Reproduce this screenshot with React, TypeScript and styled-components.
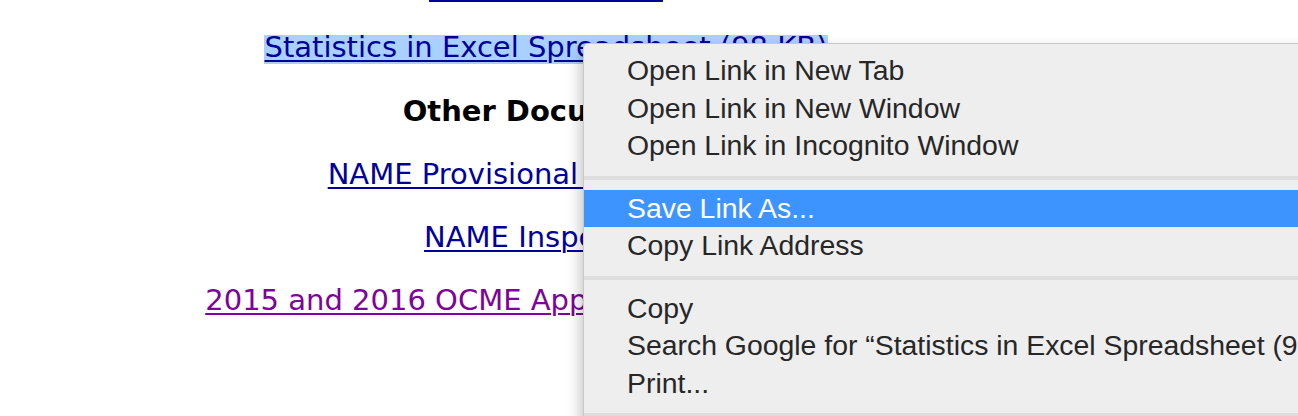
import React from 'react'
import styled, { createGlobalStyle } from 'styled-components'

const GlobalStyle = createGlobalStyle`
  html, body {
    margin: 0;
    padding: 0;
    background: #fff;
    overflow: hidden;
  }
`

const Page = styled.div`
  position: relative;
  width: 1298px;
  height: 416px;
  overflow: hidden;
  background: #fff;
`

const Content = styled.div`
  width: 1092px;
  margin-top: -30px;
  display: flex;
  flex-direction: column;
  align-items: center;
  gap: 29px;
  font-family: 'DejaVu Sans', Verdana, sans-serif;
  font-size: 29px;
  line-height: 34px;
`

const DocLink = styled.a<{ visited?: boolean; tight?: boolean }>`
  color: ${({ visited }) => (visited ? '#7d0399' : '#00009a')};
  text-decoration: underline;
  text-decoration-thickness: 2px;
  text-underline-offset: 3px;
  white-space: nowrap;
  cursor: pointer;
  margin-bottom: ${({ tight }) => (tight ? '-3px' : '0')};
`

const Selected = styled.span`
  background: linear-gradient(to bottom, transparent 5px, #a9d1ff 5px);
`

const Heading = styled.b`
  color: #000;
  font-weight: bold;
  white-space: nowrap;
  padding-top: 1px;
`

const Menu = styled.div`
  position: absolute;
  left: 583px;
  top: 43px;
  width: 820px;
  padding: 8px 0;
  background: #eeeeee;
  border: 1px solid #c9c9c9;
  border-radius: 5px;
  box-shadow: -3px 6px 14px rgba(0, 0, 0, 0.22);
  font-family: 'Liberation Sans', Arial, sans-serif;
  font-size: 28.4px;
`

const MenuItem = styled.div<{ active?: boolean }>`
  height: 37.5px;
  display: flex;
  align-items: center;
  padding-left: 43px;
  white-space: nowrap;
  color: ${({ active }) => (active ? '#fff' : '#272727')};
  background: ${({ active }) => (active ? '#3e94ff' : 'transparent')};
`

const Separator = styled.div`
  height: 4px;
  margin: 11px 0 10px;
  background: #dddddd;
`

const ContextMenu = () => (
  <Menu>
    <MenuItem>Open Link in New Tab</MenuItem>
    <MenuItem>Open Link in New Window</MenuItem>
    <MenuItem>Open Link in Incognito Window</MenuItem>
    <Separator />
    <MenuItem active>Save Link As...</MenuItem>
    <MenuItem>Copy Link Address</MenuItem>
    <Separator />
    <MenuItem>Copy</MenuItem>
    <MenuItem>Search Google for “Statistics in Excel Spreadsheet (98 KB)”</MenuItem>
    <MenuItem>Print...</MenuItem>
    <Separator />
    <MenuItem>Inspect</MenuItem>
  </Menu>
)

export default function App() {
  return (
    <Page>
      <GlobalStyle />
      <Content>
        <DocLink tight>Statistics in PDF</DocLink>
        <DocLink>
          <Selected>Statistics in Excel Spreadsheet (98 KB)</Selected>
        </DocLink>
        <Heading>Other Documents</Heading>
        <DocLink>NAME Provisional Certification</DocLink>
        <DocLink>NAME Inspection</DocLink>
        <DocLink visited>2015 and 2016 OCME Approved Budgets (PDF)</DocLink>
      </Content>
      <ContextMenu />
    </Page>
  )
}
